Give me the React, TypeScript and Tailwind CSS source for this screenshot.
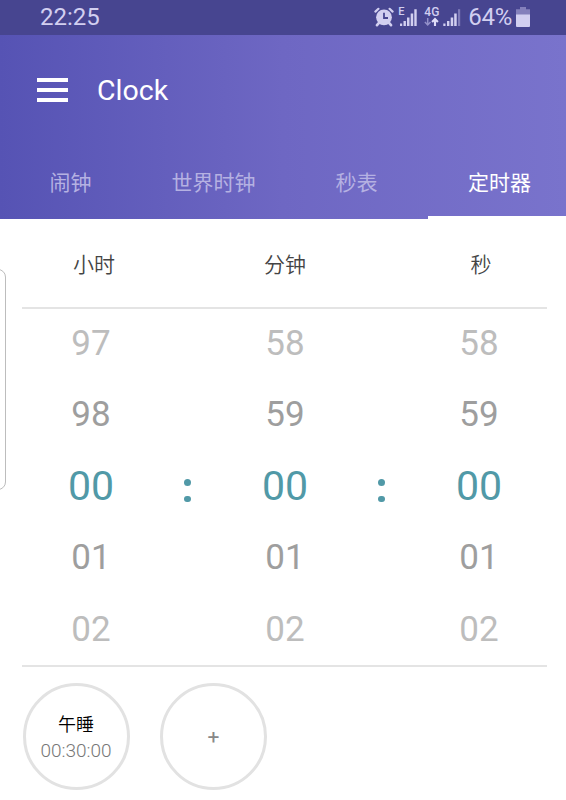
import clsx from "clsx";

const tabs = ["闹钟", "世界时钟", "秒表", "定时器"];

const columns = [
  { label: "小时", values: ["97", "98", "00", "01", "02"], shift: "pl-[6px]" },
  { label: "分钟", values: ["58", "59", "00", "01", "02"], shift: "" },
  { label: "秒", values: ["58", "59", "00", "01", "02"], shift: "pl-[4px]" },
];

const tones = [
  "text-[35px] text-[#bdbdbd]",
  "text-[35px] text-[#9e9e9e]",
  "text-[41px] text-[#5199a7]",
  "text-[35px] text-[#9e9e9e]",
  "text-[35px] text-[#bdbdbd]",
];

function AlarmIcon() {
  return (
    <svg width="20" height="20" viewBox="0 0 20 20" fill="none">
      <circle cx="10" cy="10.3" r="7.9" fill="#d2cff0" />
      <path d="M1.4 4.6 4.4 1.8M18.6 4.6 15.6 1.8" stroke="#d2cff0" strokeWidth="2.2" strokeLinecap="round" />
      <path d="M5 15.8 3 18.2M15 15.8l2 2.4" stroke="#d2cff0" strokeWidth="2.6" strokeLinecap="round" />
      <path d="M10 5.8v5.2h4" stroke="#474590" strokeWidth="1.8" />
    </svg>
  );
}

function SignalOne() {
  return (
    <div className="flex h-[20px] items-start text-[#d2cff0]">
      <span className="w-[6px] text-[11px] leading-[9px] font-medium">E</span>
      <svg width="17" height="20" viewBox="3 0 17 20" fill="currentColor" className="-ml-[4px]">
        <path d="M3 16.5h2.2V19H3zM6.5 14h2.4v5H6.5zM10 10.5h2.5V19H10zM13.7 6.5h2.5V19h-2.5zM17.3 2.2h2.4V19h-2.4z" />
      </svg>
    </div>
  );
}

function SignalTwo() {
  return (
    <div className="flex h-[20px] text-[#d2cff0]">
      <div className="flex w-[16px] flex-col">
        <span className="text-[12px] leading-[10px] font-medium">4G</span>
        <svg width="16" height="10" viewBox="0 10 16 10" fill="none">
          <path d="M3.7 11v7M.9 15l2.8 3 2.8-3" stroke="#9390c9" strokeWidth="1.5" />
          <path d="M11 19v-7M8.1 14.9l2.9-3 2.9 3" stroke="#e0ddf8" strokeWidth="2.1" />
        </svg>
      </div>
      <svg width="18" height="20" viewBox="19 0 18 20" fill="currentColor" className="ml-[3px]">
        <path d="M19.3 16.5h2.2V19h-2.2zM23 14h2.4v5H23zM26.7 10.5h2.5V19h-2.5zM30.2 6.5h2.5V19h-2.5z" />
        <path d="M34 2.2h2.2V19H34z" fill="#7f7bb9" />
      </svg>
    </div>
  );
}

function BatteryIcon() {
  return (
    <svg width="14" height="20" viewBox="0 0 14 20">
      <path d="M4 0h6v2.2h4V8H0V2.2h4z" fill="#8480bb" />
      <path d="M0 7.5h14V19a1 1 0 0 1-1 1H1a1 1 0 0 1-1-1z" fill="#d2cff0" />
    </svg>
  );
}

function Colon() {
  return (
    <div className="flex w-[8px] shrink-0 flex-col items-start gap-[10px] pt-[9px]">
      <span className="size-[6.5px] rounded-full bg-[#5199a7]" />
      <span className="size-[6.5px] rounded-full bg-[#5199a7]" />
    </div>
  );
}

export default function App() {
  return (
    <div className="h-[800px] w-[566px] overflow-hidden bg-white font-['Roboto','Noto_Sans_CJK_SC',sans-serif]">
      {/* status bar */}
      <div className="flex h-[35px] items-center justify-between bg-[#474590] pr-[36px] pb-[2px] pl-[40px] text-[#d2cff0]">
        <span className="text-[24px] leading-none">22:25</span>
        <div className="flex items-center">
          <AlarmIcon />
          <span className="w-[4px]" />
          <SignalOne />
          <span className="w-[7px]" />
          <SignalTwo />
          <span className="mr-[4px] ml-[7px] text-[24px] leading-none tracking-[-0.3px]">64%</span>
          <BatteryIcon />
        </div>
      </div>

      <header className="flex h-[184px] flex-col justify-between bg-linear-to-r from-[#5653b4] via-[#6e67c3] to-[#7973cc]">
        <div className="flex h-[110px] items-center pl-[37px]">
          <div className="flex w-[31px] flex-col gap-[5.5px]">
            <span className="h-[4.5px] bg-white" />
            <span className="h-[4.5px] bg-white" />
            <span className="h-[4.5px] bg-white" />
          </div>
          <h1 className="pt-[2px] pl-[29px] text-[28.5px] leading-none text-white">Clock</h1>
        </div>
        <nav className="-ml-px flex h-[74px] w-[572px] text-[21px]">
          {tabs.map((tab, i) => (
            <button
              key={tab}
              className={clsx(
                "flex w-[143px] items-center justify-center border-b-[3px] pt-[7px]",
                i === 3 ? "border-white text-white" : "border-transparent text-[#b5b1e2]",
              )}
            >
              {tab}
            </button>
          ))}
        </nav>
      </header>

      <main className="pr-[19px] pl-[22px]">
        {/* column titles */}
        <div className="-mr-[7px] -ml-[6px] flex h-[88px] items-center justify-between pt-[5px] text-[21px] font-[350] text-[#444]">
          {columns.map((col) => (
            <div key={col.label} className={clsx("w-[150px] text-center", col.shift)}>
              {col.label}
            </div>
          ))}
        </div>

        <section className="border-y-2 border-[#e4e4e4]">
          <div className="-mt-[1.5px]">
            {tones.map((tone, row) => (
              <div key={row} className="-mr-[7px] -ml-[6px] flex h-[71.5px] items-center justify-between leading-none">
                {columns.map((col, i) => (
                  <div key={col.label} className="contents">
                    {i > 0 && row === 2 && <Colon />}
                    <span className={clsx("w-[150px] text-center", tone)}>{col.values[row]}</span>
                  </div>
                ))}
              </div>
            ))}
          </div>
        </section>

        {/* presets */}
        <div className="flex gap-[30.5px] pt-[16px] pl-[0.5px]">
          <button className="flex size-[107px] flex-col items-center justify-center rounded-full border-3 border-[#e2e2e2]">
            <span className="pt-[2px] text-[18px] leading-[26px] font-[350] text-black">午睡</span>
            <span className="text-[19px] leading-[25px] font-light text-[#777]">00:30:00</span>
          </button>
          <button className="flex size-[107px] items-center justify-center rounded-full border-3 border-[#e2e2e2] pt-[2px] text-[21px] text-[#888]">
            +
          </button>
        </div>
      </main>

      {/* edge panel handle */}
      <div className="absolute top-[269px] left-[-10px] h-[221px] w-[16px] rounded-r-[8px] border border-[#bdbdbd]" />
    </div>
  );
}
